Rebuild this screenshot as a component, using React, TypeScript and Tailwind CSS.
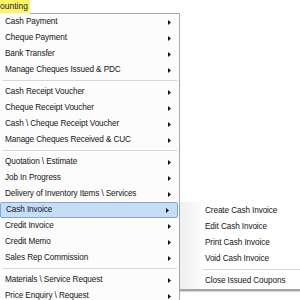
type Item = { label: string; sub?: boolean; active?: boolean } | 'sep';

const mainItems: Item[] = [
  { label: 'Cash Payment', sub: true },
  { label: 'Cheque Payment', sub: true },
  { label: 'Bank Transfer', sub: true },
  { label: 'Manage Cheques Issued & PDC', sub: true },
  'sep',
  { label: 'Cash Receipt Voucher', sub: true },
  { label: 'Cheque Receipt Voucher', sub: true },
  { label: 'Cash \\ Cheque Receipt Voucher', sub: true },
  { label: 'Manage Cheques Received & CUC', sub: true },
  'sep',
  { label: 'Quotation \\ Estimate', sub: true },
  { label: 'Job In Progress', sub: true },
  { label: 'Delivery of Inventory Items \\ Services', sub: true },
  { label: 'Cash Invoice', sub: true, active: true },
  { label: 'Credit Invoice', sub: true },
  { label: 'Credit Memo', sub: true },
  { label: 'Sales Rep Commission', sub: true },
  'sep',
  { label: 'Materials \\ Service Request', sub: true },
  { label: 'Price Enquiry \\ Request', sub: true },
];

const subItems: Item[] = [
  { label: 'Create Cash Invoice' },
  { label: 'Edit Cash Invoice' },
  { label: 'Print Cash Invoice' },
  { label: 'Void Cash Invoice' },
  'sep',
  { label: 'Close Issued Coupons' },
];

function Arrow() {
  return (
    <svg width="3" height="5" viewBox="0 0 3 5" className="flex-shrink-0">
      <path d="M0 0L3 2.5L0 5Z" fill="#111" />
    </svg>
  );
}

function Separator({ inset }: { inset: string }) {
  return (
    <div className={`h-[6px] flex flex-col justify-center ${inset}`}>
      <div className="h-px bg-[#d5d5d5]" />
      <div className="h-px bg-white" />
    </div>
  );
}

export default function App() {
  return (
    <div
      className="relative w-[300px] h-[300px] overflow-hidden bg-white text-[8.2px] text-[#141414]"
      style={{ fontFamily: '"Liberation Sans", Arial, sans-serif' }}
    >
      {/* Ribbon tab (cropped) */}
      <div className="flex h-[13px]">
        <div className="w-[30px] bg-[#fbf46b] flex items-center text-[8.5px] leading-none text-[#222]">
          ounting
        </div>
      </div>

      {/* Main dropdown */}
      <div className="w-[180px] bg-[#fcfcfc] border-r border-[#a7a7a7]">
        <div className="flex h-px">
          <div className="w-[30px]" />
          <div className="flex-1 bg-[#a7a7a7]" />
        </div>
        {mainItems.map((item, i) =>
          item === 'sep' ? (
            <Separator key={i} inset="ml-[3px] mr-[2px]" />
          ) : (
            <div
              key={i}
              className={`h-[16px] flex items-center justify-between pl-[5px] pr-[8px] ${
                item.active ? 'mr-[1px] border border-[#7fa8da] bg-[#c6ddf6] rounded-[2px] pl-[4px] pr-[7px]' : ''
              }`}
            >
              <span className="whitespace-nowrap tracking-[-0.1px]">{item.label}</span>
              {item.sub && <Arrow />}
            </div>
          )
        )}
      </div>

      {/* Cash Invoice submenu */}
      <div className="absolute left-[180px] top-[202px] w-[130px] bg-white border-b-2 border-[#a3a3a3] shadow-[0_1px_1px_rgba(0,0,0,0.15)]">
        <div className="flex">
          <div className="w-[20px] bg-gradient-to-r from-[#f0f0f0] to-[#fafafa]" />
          <div className="flex-1 pt-px">
            {subItems.map((item, i) =>
              item === 'sep' ? (
                <Separator key={i} inset="ml-[3px]" />
              ) : (
                <div key={i} className="h-[16px] flex items-center pl-[5px] whitespace-nowrap tracking-[-0.1px]">
                  {item.label}
                </div>
              )
            )}
          </div>
        </div>
      </div>
    </div>
  );
}
